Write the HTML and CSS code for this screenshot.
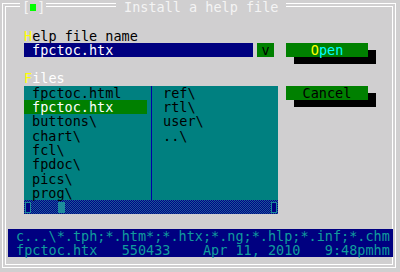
FILE: index.html
```html
<!DOCTYPE html>
<html lang="en">
<head>
    <meta charset="UTF-8">
    <title>Install a help file</title>
    <link rel="stylesheet" href="styles.css">
</head>
<body>
    <div class="window">
        <div class="close-box">[<span class="close-mark"></span>]</div>
        <div class="title">Install a help file</div>

        <div class="content">
            <div class="label dark"><span class="hot">H</span>elp file name</div>
            <div class="input-row">
                <div class="input">fpctoc.htx</div>
                <div class="drop">v</div>
                <div class="button open"><span class="hot">O</span><span class="hot-rest">pen</span></div>
            </div>

            <div class="label light"><span class="hot">F</span>iles</div>
            <div class="files-row">
                <div class="file-box">
                    <div class="file-list">
                        <div class="file-col">
                            <div class="file">fpctoc.html</div>
                            <div class="file selected">fpctoc.htx</div>
                            <div class="file">buttons\</div>
                            <div class="file">chart\</div>
                            <div class="file">fcl\</div>
                            <div class="file">fpdoc\</div>
                            <div class="file">pics\</div>
                            <div class="file">prog\</div>
                        </div>
                        <div class="file-col second">
                            <div class="file">ref\</div>
                            <div class="file">rtl\</div>
                            <div class="file">user\</div>
                            <div class="file">..\</div>
                        </div>
                    </div>
                    <div class="scrollbar">
                        <span class="arrow"></span>
                        <span class="thumb"></span>
                        <span class="arrow right"></span>
                    </div>
                </div>
                <div class="button cancel">Cancel</div>
            </div>

            <div class="info">
                <div class="info-line">c...\*.tph;*.htm*;*.htx;*.ng;*.hlp;*.inf;*.chm</div>
                <div class="info-line">fpctoc.htx   550433    Apr 11, 2010   9:48pmhm</div>
            </div>
        </div>
    </div>
</body>
</html>
```

FILE: styles.css
```css
html, body {
    margin: 0;
    padding: 0;
}
body {
    width: 400px;
    height: 272px;
    overflow: hidden;
    background-color: #d0cfd0;
    font-family: "DejaVu Sans Mono", "Liberation Mono", monospace;
    font-size: 13.5px;
    line-height: 14.3px;
}
.window {
    position: relative;
    width: 386px;
    height: 257px;
    margin: 3px 0 0 2px;
    border: 4px double #ffffff;
}
.close-box {
    position: absolute;
    top: -7px;
    left: 14px;
    padding: 0 2px;
    background-color: #d0cfd0;
    color: #f4f4f4;
    letter-spacing: -1px;
}
.close-mark {
    display: inline-block;
    width: 6px;
    height: 7px;
    margin: 0 1px;
    background-color: #00ff00;
    vertical-align: 1px;
}
.title {
    position: absolute;
    top: -7px;
    left: 110px;
    padding: 0 8px;
    background-color: #d0cfd0;
    color: #f4f4f4;
}
.content {
    padding: 21.6px 0 0 2px;
}
.label {
    margin-left: 16px;
    height: 14.3px;
}
.dark {
    color: #000000;
}
.light {
    color: #ffffff;
}
.hot {
    color: #ffff00;
}
.hot-rest {
    color: #00ffff;
}
.input-row {
    display: flex;
    margin-left: 16px;
    height: 14.3px;
    margin-bottom: 14.3px;
}
.input {
    width: 221px;
    padding-left: 8px;
    background-color: #000080;
    color: #ffffff;
}
.drop {
    width: 17px;
    margin-left: 4px;
    text-align: center;
    background-color: #008000;
    color: #000000;
}
.button {
    width: 82px;
    height: 14px;
    text-align: center;
    background-color: #008000;
    color: #000000;
    box-shadow: 8px 7px 0 #000000;
}
.open {
    margin-left: 12px;
}
.files-row {
    display: flex;
    align-items: flex-start;
    margin-left: 16px;
}
.file-box {
    width: 254px;
}
.file-list {
    display: flex;
    height: 114.4px;
    background-color: #008080;
    color: #000000;
}
.file-col {
    width: 127px;
}
.file-col.second {
    flex: 1;
    border-left: 1px solid #0000a8;
}
.file {
    padding-left: 8px;
    height: 14.3px;
}
.second .file {
    padding-left: 11px;
}
.selected {
    width: 115px;
    background-color: #008000;
    color: #ffffff;
}
.scrollbar {
    display: flex;
    align-items: center;
    height: 14.3px;
    background: repeating-conic-gradient(#000088 0 25%, #1a5c96 0 50%) 0 0 / 2px 2px;
}
.arrow {
    width: 4px;
    height: 9px;
    margin-left: 1px;
    border: 1px solid #1a8a9a;
    background-color: #000080;
}
.arrow.right {
    margin-left: auto;
    margin-right: 1px;
}
.thumb {
    width: 7px;
    height: 11px;
    margin-left: 27px;
    background-color: #1c8c9c;
}
.cancel {
    margin-left: 8px;
}
.info {
    height: 28.6px;
    width: 377px;
    margin-top: 14.3px;
    padding-left: 8px;
    background-color: #000080;
    color: #109c9c;
}
.info-line {
    height: 14.3px;
    white-space: pre;
}
```
